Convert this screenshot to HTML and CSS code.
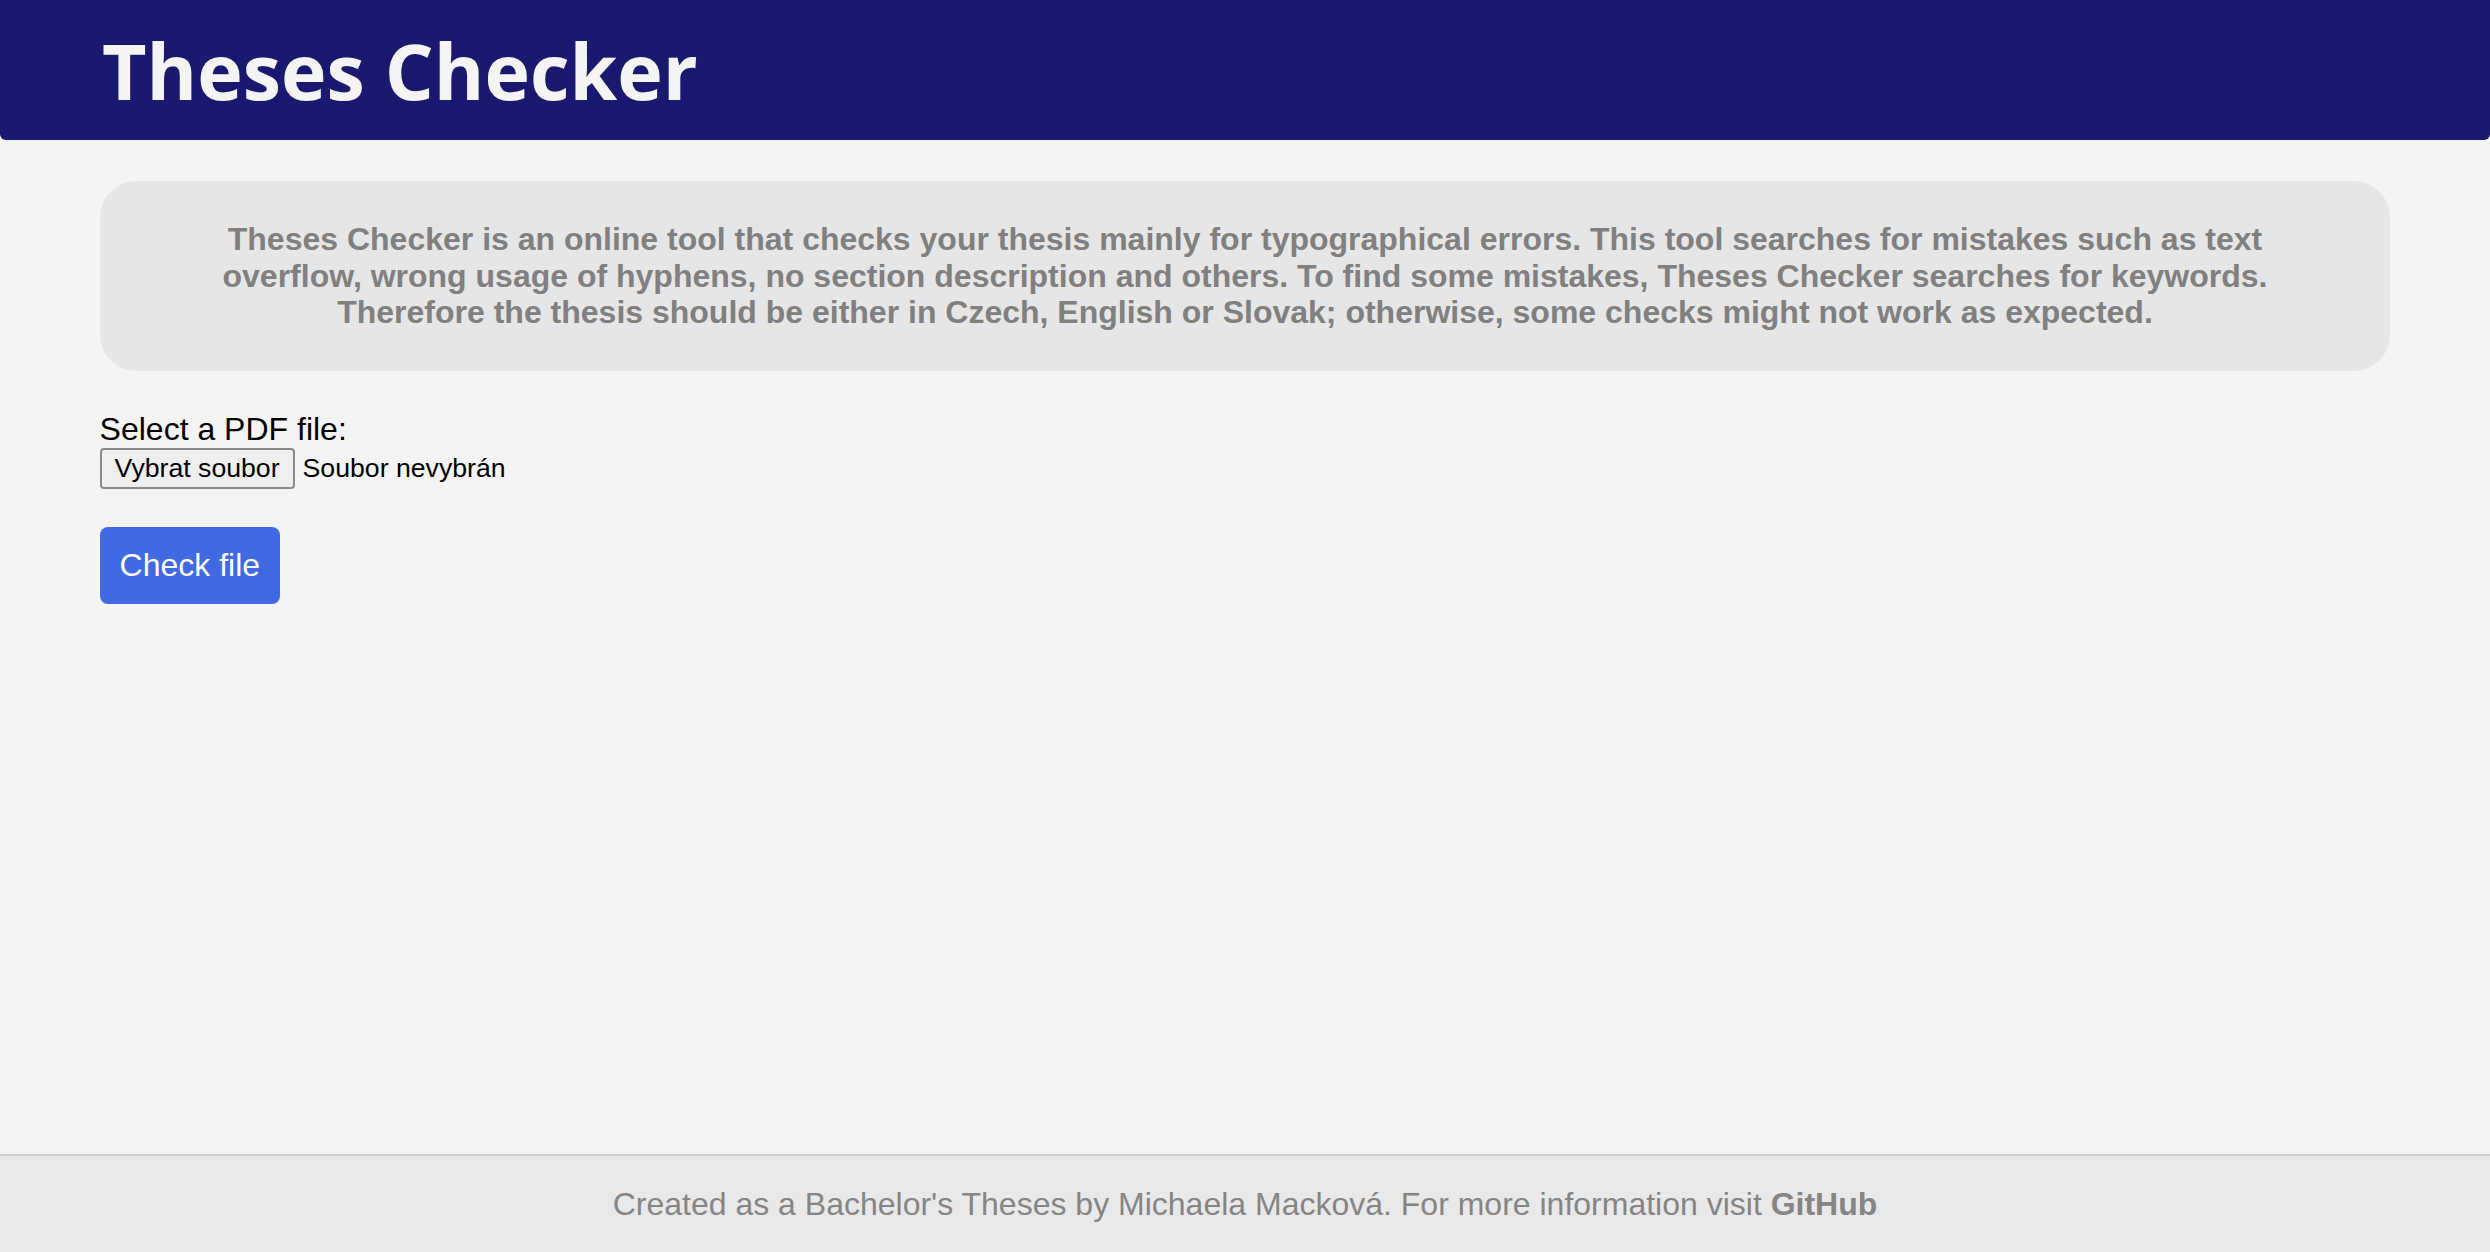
FILE: index.html
```html
<!DOCTYPE html>
<html lang="en">
<head>
<meta charset="utf-8">
<title>Theses Checker</title>
<link rel="stylesheet" href="styles.css">
</head>
<body>
<header class="site-header">
  <h1 class="site-title">Theses Checker</h1>
</header>
<main class="content">
  <div class="intro">
    <p>Theses Checker is an online tool that checks your thesis mainly for typographical errors. This tool searches for mistakes such as text overflow, wrong usage of hyphens, no section description and others. To find some mistakes, Theses Checker searches for keywords. Therefore the thesis should be either in Czech, English or Slovak; otherwise, some checks might not work as expected.</p>
  </div>
  <form class="upload-form">
    <div class="field-label">Select a PDF file:</div>
    <div class="file-row">
      <label class="file-btn">Vybrat soubor<input class="file-input" type="file" accept="application/pdf"></label>
      <span class="file-name">Soubor nevybrán</span>
    </div>
    <button class="check-btn" type="button">Check file</button>
  </form>
</main>
<footer class="site-footer">
  Created as a Bachelor's Theses by Michaela Macková. For more information visit <a class="footer-link" href="#">GitHub</a>
</footer>
</body>
</html>
```
FILE: styles.css
```css
html, body {
  margin: 0;
  padding: 0;
}
body {
  background: #f4f4f4;
  font-family: "Liberation Sans", Arial, sans-serif;
  color: #000;
  min-height: 100vh;
  display: flex;
  flex-direction: column;
}
.site-header {
  background: #191970;
  height: 140px;
  border-radius: 0 0 6px 6px;
  padding-left: 102px;
  display: flex;
  align-items: center;
}
.site-title {
  margin: 0;
  font-family: "Open Sans", Lato, sans-serif;
  font-weight: 700;
  font-size: 77px;
  color: #f4f4f4;
}
.content {
  width: 92%;
  margin: 0 auto;
  flex: 1;
}
.intro {
  margin-top: 41px;
  background: #e6e6e6;
  border-radius: 36px;
  padding: 40px 100px 40px;
  text-align: center;
}
.intro p {
  margin: 0;
  font-weight: bold;
  font-size: 32px;
  line-height: 36.5px;
  color: #808080;
}
.upload-form {
  margin-top: 40px;
}
.field-label {
  font-size: 32px;
  line-height: 37px;
}
.file-row {
  display: flex;
  align-items: center;
  height: 41px;
}
.file-btn {
  box-sizing: border-box;
  height: 41px;
  padding: 0 13px;
  display: inline-flex;
  align-items: center;
  background: #efefef;
  border: 2px solid #8a8a8a;
  border-radius: 4px;
  font-size: 26.67px;
  cursor: pointer;
}
.file-input {
  display: none;
}
.file-name {
  margin-left: 8px;
  font-size: 26.67px;
}
.check-btn {
  display: block;
  margin-top: 38px;
  background: #4169e1;
  color: #fff;
  border: none;
  border-radius: 8px;
  padding: 20px;
  font-family: "Liberation Sans", Arial, sans-serif;
  font-size: 32px;
  line-height: 37px;
  cursor: pointer;
}
.site-footer {
  background: #e9e9e9;
  border-top: 2px solid #cccccc;
  padding: 30px 0 29px;
  text-align: center;
  font-size: 32px;
  line-height: 37px;
  color: #858585;
}
.footer-link {
  color: #858585;
  font-weight: bold;
  text-decoration: none;
}
```
